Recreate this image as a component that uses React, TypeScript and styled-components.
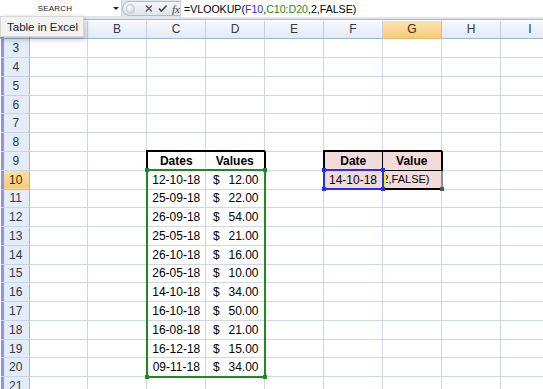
import React from 'react'
import styled, { createGlobalStyle } from 'styled-components'

const GlobalStyle = createGlobalStyle`
  html, body {
    margin: 0;
    padding: 0;
    background: #fff;
  }
  body {
    font-family: 'Liberation Sans', Arial, sans-serif;
    overflow: hidden;
  }
`

const Window = styled.div`
  position: relative;
  width: 543px;
  height: 389px;
  overflow: hidden;
  background: #fff;
`

const FormulaBar = styled.div`
  height: 20px;
  box-sizing: border-box;
  display: flex;
  align-items: flex-start;
  padding: 0 0 3px 0;
  background: #dfe6ef;
  border-bottom: 1px solid #a9bad0;
`

const NameBox = styled.div`
  width: 110px;
  flex-shrink: 0;
  height: 16px;
  display: flex;
  align-items: center;
  justify-content: center;
  background: #fff;
  font-size: 8px;
  color: #222;
  letter-spacing: 0.2px;
`

const DropArrow = styled.div`
  width: 11px;
  flex-shrink: 0;
  height: 16px;
  display: flex;
  align-items: center;
  justify-content: center;
  background: #fff;
  border-right: 1px solid #c7d2e0;
  &::after {
    content: '';
    border-left: 3px solid transparent;
    border-right: 3px solid transparent;
    border-top: 3px solid #222;
  }
`

const Pill = styled.div`
  height: 15px;
  margin-top: 1px;
  width: 58px;
  flex-shrink: 0;
  display: flex;
  align-items: center;
  gap: 5px;
  padding-left: 3px;
  box-sizing: border-box;
  border: 1px solid #aebdd0;
  border-right: none;
  border-radius: 8px 0 0 8px;
  background: linear-gradient(#f4f6f9, #dfe5ed);
`

const Dot = styled.span`
  width: 8px;
  height: 8px;
  border-radius: 50%;
  background: radial-gradient(circle at 35% 35%, #ffffff, #b8c2cf);
  border: 1px solid #c3cbd6;
  margin-right: 5px;
`

const Fx = styled.span`
  font-family: 'Liberation Serif', 'Times New Roman', serif;
  font-style: italic;
  font-size: 11px;
  color: #444;
`

const FormulaInput = styled.div`
  flex: 1;
  height: 17px;
  display: flex;
  align-items: center;
  padding-left: 3px;
  background: #fff;
  border-left: 1px solid #c7d2e0;
  font-size: 10.6px;
  color: #000;
  white-space: nowrap;
`

const Ref = styled.span<{ $color: string }>`
  color: ${p => p.$color};
`

const Tooltip = styled.div`
  position: absolute;
  left: 0;
  top: 16px;
  width: 84px;
  height: 21px;
  box-sizing: border-box;
  display: flex;
  align-items: center;
  padding-left: 6px;
  background: #f3f3f3;
  border: 1px solid #d6d6d6;
  box-shadow: 1px 2px 6px rgba(0, 0, 0, 0.25);
  font-size: 11.5px;
  color: #222;
  z-index: 5;
`

const Sheet = styled.table`
  border-collapse: collapse;
  table-layout: fixed;
  width: 559px;
  font-size: 12px;
  color: #000;
`

const Col = styled.col<{ $w: number }>`
  width: ${p => p.$w}px;
`

const HeadRow = styled.tr`
  height: 18.4px;
`

const Row = styled.tr`
  height: 18.77px;
`

const Corner = styled.th`
  background: #e4ecf7;
  border: 1px solid #9eb6ce;
  box-shadow: inset 3px 0 0 #9393e6;
`

const ColHead = styled.th<{ $active?: boolean }>`
  padding: 0;
  font-weight: normal;
  font-size: 12px;
  color: ${p => (p.$active ? '#3b2a0c' : '#2e3a4a')};
  background: ${p =>
    p.$active ? 'linear-gradient(#fbe3b4, #f6c977)' : 'linear-gradient(#f5f8fc, #e3eaf4)'};
  border-right: 1px solid ${p => (p.$active ? '#f0b964' : '#c2d0e2')};
  border-bottom: 1px solid ${p => (p.$active ? '#f0b964' : '#9eb6ce')};
`

const RowHead = styled.th<{ $active?: boolean }>`
  padding: 0 0 0 2px;
  font-weight: normal;
  font-size: 12px;
  color: ${p => (p.$active ? '#3b2a0c' : '#2e3a4a')};
  background: ${p => (p.$active ? 'linear-gradient(#fbe0aa, #f6c977)' : '#e4ecf7')};
  border-bottom: 1px solid ${p => (p.$active ? '#f0b964' : '#c8d5e6')};
  border-right: 1px solid #9eb6ce;
  box-shadow: inset 3px 0 0 #9393e6;
`

interface ICellProps {
  $align?: 'left' | 'center' | 'right'
  $bold?: boolean
  $bg?: string
  $bt?: string
  $br?: string
  $bb?: string
  $bl?: string
  $caret?: boolean
}

const Cell = styled.td<ICellProps>`
  position: relative;
  padding: 0 4px;
  white-space: nowrap;
  overflow: visible;
  text-align: ${p => p.$align || 'left'};
  font-weight: ${p => (p.$bold ? 'bold' : 'normal')};
  background: ${p => p.$bg || '#fff'};
  border: 1px solid #d0d7e5;
  ${p => p.$bt && `border-top: ${p.$bt};`}
  ${p => p.$br && `border-right: ${p.$br};`}
  ${p => p.$bb && `border-bottom: ${p.$bb};`}
  ${p => p.$bl && `border-left: ${p.$bl};`}
  ${p => p.$caret && 'box-shadow: inset 2px 0 0 #f2ea1a;'}
`

const Money = styled.div`
  display: flex;
  justify-content: space-between;
  padding: 0 1px 0 3px;
`

const EditText = styled.div`
  display: flex;
  justify-content: flex-end;
  overflow: hidden;
  padding-right: 7px;
  margin-left: -2px;
  font-size: 11px;
`

const Handle = styled.span<{ $pos: 'tl' | 'tr' | 'bl' | 'br'; $color: string }>`
  position: absolute;
  z-index: 3;
  width: 4px;
  height: 4px;
  background: ${p => p.$color};
  ${p => (p.$pos[0] === 't' ? 'top: -3px;' : 'bottom: -3px;')}
  ${p => (p.$pos[1] === 'l' ? 'left: -3px;' : 'right: -3px;')}
`

const cols = ['A', 'B', 'C', 'D', 'E', 'F', 'G', 'H', 'I']
const widths = [29, 58, 59, 59, 59, 59, 59, 59, 59, 59]

const data = [
  ['12-10-18', '12.00'],
  ['25-09-18', '22.00'],
  ['26-09-18', '54.00'],
  ['25-05-18', '21.00'],
  ['26-10-18', '16.00'],
  ['26-05-18', '10.00'],
  ['14-10-18', '34.00'],
  ['16-10-18', '50.00'],
  ['16-08-18', '21.00'],
  ['16-12-18', '15.00'],
  ['09-11-18', '34.00'],
]

const BLACK2 = '2px solid #000'
const BLACK1 = '1px solid #000'
const GREEN = '2px solid #1f8a1f'
const BLUE = '2px solid #2b2bff'
const PINK = '#f2dcdb'
const GREEN_DOT = '#1f8a1f'
const BLUE_DOT = '#2b2bff'

const Cross = () => (
  <svg width="9" height="9" viewBox="0 0 9 9">
    <path d="M1.5 1.5 L7.5 7.5 M7.5 1.5 L1.5 7.5" stroke="#5a5a5a" strokeWidth="1.6" strokeLinecap="round" />
  </svg>
)

const Check = () => (
  <svg width="11" height="9" viewBox="0 0 11 9">
    <path d="M1 4.5 L4 7.5 L10 1" stroke="#4a4a4a" strokeWidth="1.8" fill="none" strokeLinejoin="round" />
  </svg>
)

const renderCell = (row: number, col: string) => {
  const key = col + row
  if (row === 9 && col === 'C')
    return <Cell key={key} $align="center" $bold $bt={BLACK2} $bl={BLACK2} $bb={BLACK1}>Dates</Cell>
  if (row === 9 && col === 'D')
    return <Cell key={key} $align="center" $bold $bt={BLACK2} $br={BLACK2} $bb={BLACK1}>Values</Cell>
  if (row === 9 && col === 'F')
    return <Cell key={key} $align="center" $bold $bg={PINK} $bt={BLACK2} $bl={BLACK2} $br={BLACK1} $bb={BLACK1}>Date</Cell>
  if (row === 9 && col === 'G')
    return <Cell key={key} $align="center" $bold $bg={PINK} $bt={BLACK2} $br={BLACK2} $bb={BLACK1}>Value</Cell>
  if (row === 10 && col === 'F')
    return (
      <Cell key={key} $align="center" $bg={PINK} $bt={BLUE} $bl={BLUE} $br={BLUE} $bb={BLUE}>
        14-10-18
        <Handle $pos="tl" $color={BLUE_DOT} />
        <Handle $pos="tr" $color={BLUE_DOT} />
        <Handle $pos="bl" $color={BLUE_DOT} />
        <Handle $pos="br" $color={BLUE_DOT} />
      </Cell>
    )
  if (row === 10 && col === 'G')
    return (
      <Cell key={key} $bg={PINK} $caret $br="2px solid #8d8d8d" $bb={BLACK2}>
        <EditText>
          <span>=VLOOKUP(F10,C10:D20,2,FALSE)</span>
        </EditText>
        <Handle $pos="br" $color="#555" />
      </Cell>
    )
  if (row >= 10 && row <= 20 && (col === 'C' || col === 'D')) {
    const [date, value] = data[row - 10]
    const top = row === 10 ? GREEN : undefined
    const bottom = row === 20 ? GREEN : undefined
    if (col === 'C')
      return (
        <Cell key={key} $align="center" $bl={GREEN} $bt={top} $bb={bottom}>
          {date}
          {row === 10 && <Handle $pos="tl" $color={GREEN_DOT} />}
          {row === 20 && <Handle $pos="bl" $color={GREEN_DOT} />}
        </Cell>
      )
    return (
      <Cell key={key} $br={GREEN} $bt={top} $bb={bottom}>
        <Money>
          <span>$</span>
          <span>{value}</span>
        </Money>
        {row === 10 && <Handle $pos="tr" $color={GREEN_DOT} />}
        {row === 20 && <Handle $pos="br" $color={GREEN_DOT} />}
      </Cell>
    )
  }
  return <Cell key={key} />
}

const rows = Array.from({ length: 19 }, (_, i) => i + 3)

const App = () => (
  <Window>
    <GlobalStyle />
    <FormulaBar>
      <NameBox>SEARCH</NameBox>
      <DropArrow />
      <Pill>
        <Dot />
        <Cross />
        <Check />
        <Fx>fx</Fx>
      </Pill>
      <FormulaInput>
        =VLOOKUP(<Ref $color="#2b2bff">F10</Ref>,<Ref $color="#1f8a1f">C10:D20</Ref>,2,FALSE)
      </FormulaInput>
    </FormulaBar>

    <Sheet>
      <colgroup>
        {widths.map((w, i) => (
          <Col key={i} $w={w} />
        ))}
      </colgroup>
      <thead>
        <HeadRow>
          <Corner />
          {cols.map(c => (
            <ColHead key={c} $active={c === 'G'}>
              {c}
            </ColHead>
          ))}
        </HeadRow>
      </thead>
      <tbody>
        {rows.map(r => (
          <Row key={r}>
            <RowHead $active={r === 10}>{r}</RowHead>
            {cols.map(c => renderCell(r, c))}
          </Row>
        ))}
      </tbody>
    </Sheet>

    <Tooltip>Table in Excel</Tooltip>
  </Window>
)

export default App
